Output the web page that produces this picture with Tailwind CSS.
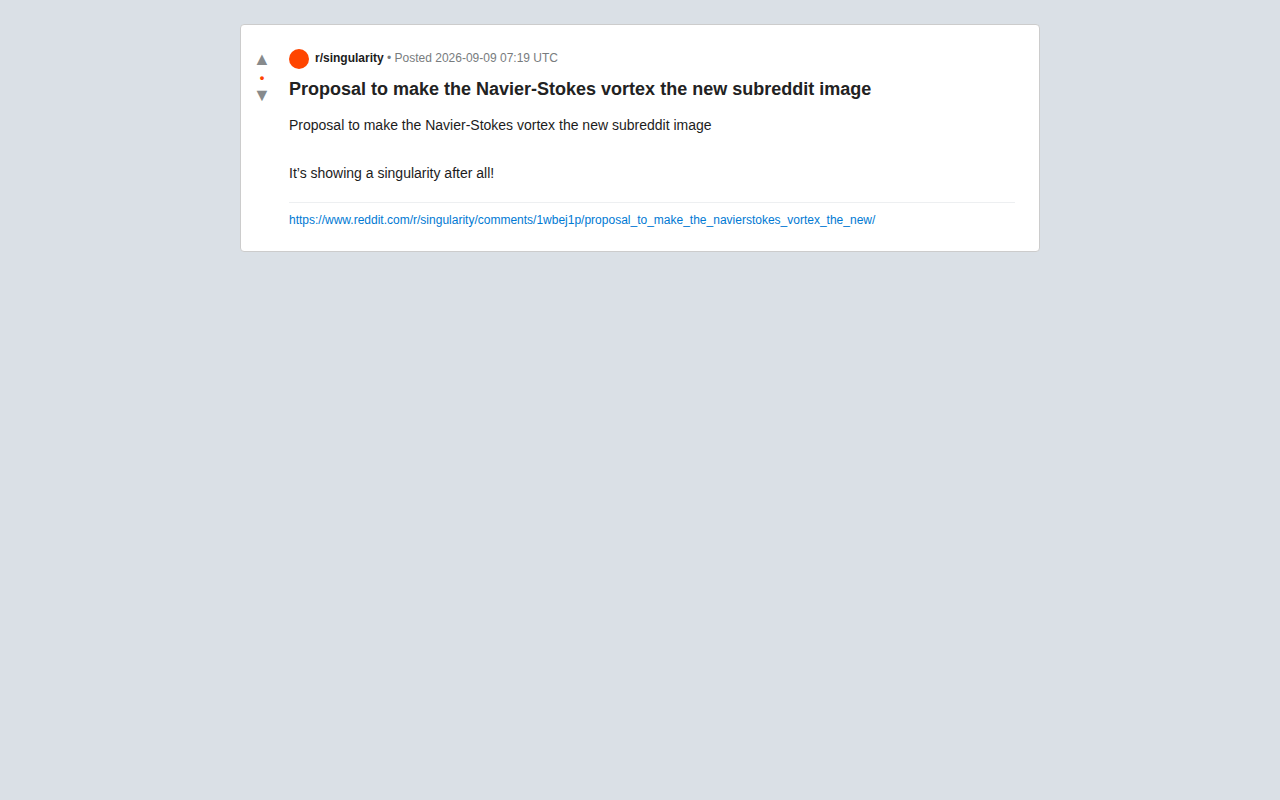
<!DOCTYPE html>
<html lang="en">
  <head>
    <meta charset="UTF-8" />
    <meta name="viewport" content="width=device-width, initial-scale=1.0" />
    <title>r/singularity</title>
    <script src="https://cdn.jsdelivr.net/npm/@tailwindcss/browser@4"></script>
  </head>
  <body class="bg-[#dae0e6] p-6 font-['Liberation_Sans',Arial,sans-serif] text-sm text-[#1c1c1c]">
    <article class="mx-auto flex max-w-[800px] rounded border border-[#cccccc] bg-white">
      <div class="flex w-10 shrink-0 flex-col items-center pt-6 pl-0.5 text-lg leading-[20px] text-[#878a8c]">
        <button type="button" aria-label="Upvote">▲</button>
        <span class="pt-0.5 text-[13px] leading-[14px] font-bold text-[#ff4500]">•</span>
        <button type="button" aria-label="Downvote">▼</button>
      </div>
      <div class="min-w-0 flex-1 py-6 pr-6 pl-2">
        <header class="flex gap-1.5 text-xs text-[#787c7e]">
          <span class="size-5 rounded-full bg-[#ff4500]"></span>
          <p class="leading-[18px]">
            <span class="font-bold text-[#1c1c1c]">r/singularity</span> • Posted 2026-09-09 07:19 UTC
          </p>
        </header>
        <h1 class="mt-2 text-lg leading-6 font-bold text-[#222222]">Proposal to make the Navier-Stokes vortex the new subreddit image</h1>
        <div class="mt-3 leading-6">
          <p>Proposal to make the Navier-Stokes vortex the new subreddit image</p>
          <p class="mt-6">It’s showing a singularity after all!</p>
        </div>
        <footer class="mt-[17px] border-t border-[#edeff1] pt-2.5 text-xs leading-[14px]">
          <a href="https://www.reddit.com/r/singularity/comments/1wbej1p/proposal_to_make_the_navierstokes_vortex_the_new/" class="break-all text-[#0079d3]">https://www.reddit.com/r/singularity/comments/1wbej1p/proposal_to_make_the_navierstokes_vortex_the_new/</a>
        </footer>
      </div>
    </article>
  </body>
</html>
